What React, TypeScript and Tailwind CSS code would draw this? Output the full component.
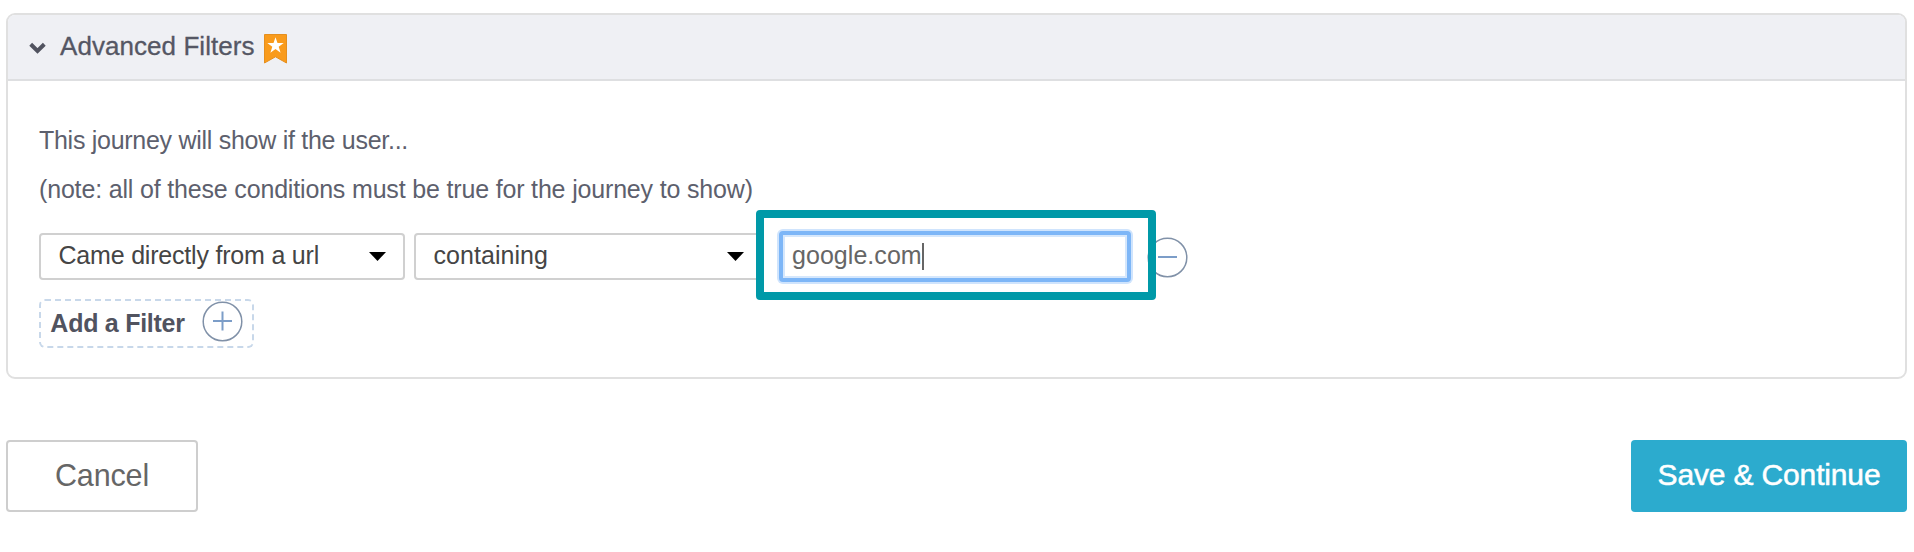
import type { ReactNode } from 'react';

function Caret() {
  return (
    <svg className="h-[9px] w-[17px] shrink-0" viewBox="0 0 17 9">
      <path d="M0 0H17L8.5 9Z" fill="#000" />
    </svg>
  );
}

function Select({ children, className }: { children: ReactNode; className: string }) {
  return (
    <button
      className={`flex h-[47px] items-center justify-between rounded-[4px] border-2 border-[#d0d0d0] bg-white pl-[17.5px] text-[25px] leading-none text-[#454545] ${className}`}
    >
      <span className="-mt-[3px] whitespace-nowrap">{children}</span>
      <Caret />
    </button>
  );
}

function RoundIcon({ plus = false }: { plus?: boolean }) {
  return (
    <svg className="size-[41px] shrink-0" viewBox="0 0 41 41" fill="none">
      <circle cx="20.5" cy="20.5" r="19.3" stroke="#8091a8" strokeWidth="1.5" />
      <path d="M11 20H30" stroke="#7c9dc8" strokeWidth="2" />
      {plus && <path d="M20.5 10.5V29.5" stroke="#7c9dc8" strokeWidth="2" />}
    </svg>
  );
}

function BookmarkStar() {
  return (
    <svg className="mt-[4px] ml-[9.5px] h-[30px] w-[23px]" viewBox="0 0 23 30">
      <path d="M0.5 0.5H22.5V29L11.5 22.8L0.5 29Z" fill="#f99b1c" stroke="#e58f1e" />
      <path
        d="M11.5 3.2L13.5 9.1H19.7L14.7 12.8L16.6 18.8L11.5 15.1L6.4 18.8L8.3 12.8L3.3 9.1H9.5Z"
        fill="#fff"
      />
    </svg>
  );
}

export default function App() {
  return (
    <main className="h-[552px] w-[1914px] bg-white pt-[13px] pl-[6px] font-['Liberation_Sans',Arial,sans-serif]">
      <section className="h-[366px] w-[1901px] overflow-hidden rounded-[9px] border-2 border-[#e0e0e0]">
        <header className="flex h-[66px] items-center border-b-2 border-[#dedfe1] bg-[#eff0f4] pl-[21px]">
          <svg className="mt-px h-[12px] w-[17px]" viewBox="0 0 17 12" fill="none">
            <path d="M1.7 2.3L8.5 8.9L15.3 2.3" stroke="#51535f" strokeWidth="4" />
          </svg>
          <h2 className="mb-[3px] ml-[14px] text-[26px] leading-none tracking-[0.06px] text-[#555764] [-webkit-text-stroke:0.3px]">
            Advanced Filters
          </h2>
          <BookmarkStar />
        </header>

        <div className="flex flex-col items-start pt-[35px] pl-[31px]">
          <p className="h-[49px] text-[25px] leading-[49px] tracking-[-0.28px] text-[#5d606d]">
            This journey will show if the user...
          </p>
          <p className="h-[49px] text-[25px] leading-[49px] tracking-[-0.17px] text-[#5d606d]">
            (note: all of these conditions must be true for the journey to show)
          </p>

          <div className="relative mt-[19px] flex h-[47px] items-center">
            <Select className="w-[366px] pr-[17px] tracking-[-0.2px]">Came directly from a url</Select>
            <Select className="ml-[9px] w-[346px] pr-[14px] tracking-[0.05px]">containing</Select>
            <div className="-mt-px ml-[19px] flex h-[51px] w-[352px] items-center rounded-[4px] border-4 border-[#7db6f7] bg-white pl-[9px] text-[25px] leading-none tracking-[0.05px] text-[#666] shadow-[0_0_0_2px_#cfe4fd,inset_0_0_0_2px_#d5e7fc]">
              <span className="-mt-px">google.com</span>
              <span className="h-[27px] w-[2px] bg-[#666]" />
            </div>
            <div className="mt-px ml-[16px]">
              <RoundIcon />
            </div>
            <div className="pointer-events-none absolute -top-[23px] left-[717px] h-[90px] w-[400px] rounded-[4px] border-8 border-[#0099a8]" />
          </div>

          <button className="mt-[19px] flex h-[49px] w-[215px] items-center rounded-[6px] border-2 border-dashed border-[#c8d8ea] pl-[9px] text-[25px] leading-none font-bold text-[#51535f]">
            <span className="w-[135px] whitespace-nowrap tracking-[-0.27px]">Add a Filter</span>
            <span className="-mt-[4px] ml-[17px]">
              <RoundIcon plus />
            </span>
          </button>
        </div>
      </section>

      <footer className="mt-[61px] flex w-[1901px] justify-between">
        <button className="h-[72px] w-[192px] rounded-[4px] border-2 border-[#cecece] bg-white pb-[2px] text-[30.5px] leading-none tracking-[-0.15px] text-[#666]">
          Cancel
        </button>
        <button className="h-[72px] w-[276px] rounded-[4px] bg-[#2cabce] pb-[2px] text-[30px] leading-none tracking-[-0.15px] text-white [-webkit-text-stroke:0.5px]">
          Save &amp; Continue
        </button>
      </footer>
    </main>
  );
}
